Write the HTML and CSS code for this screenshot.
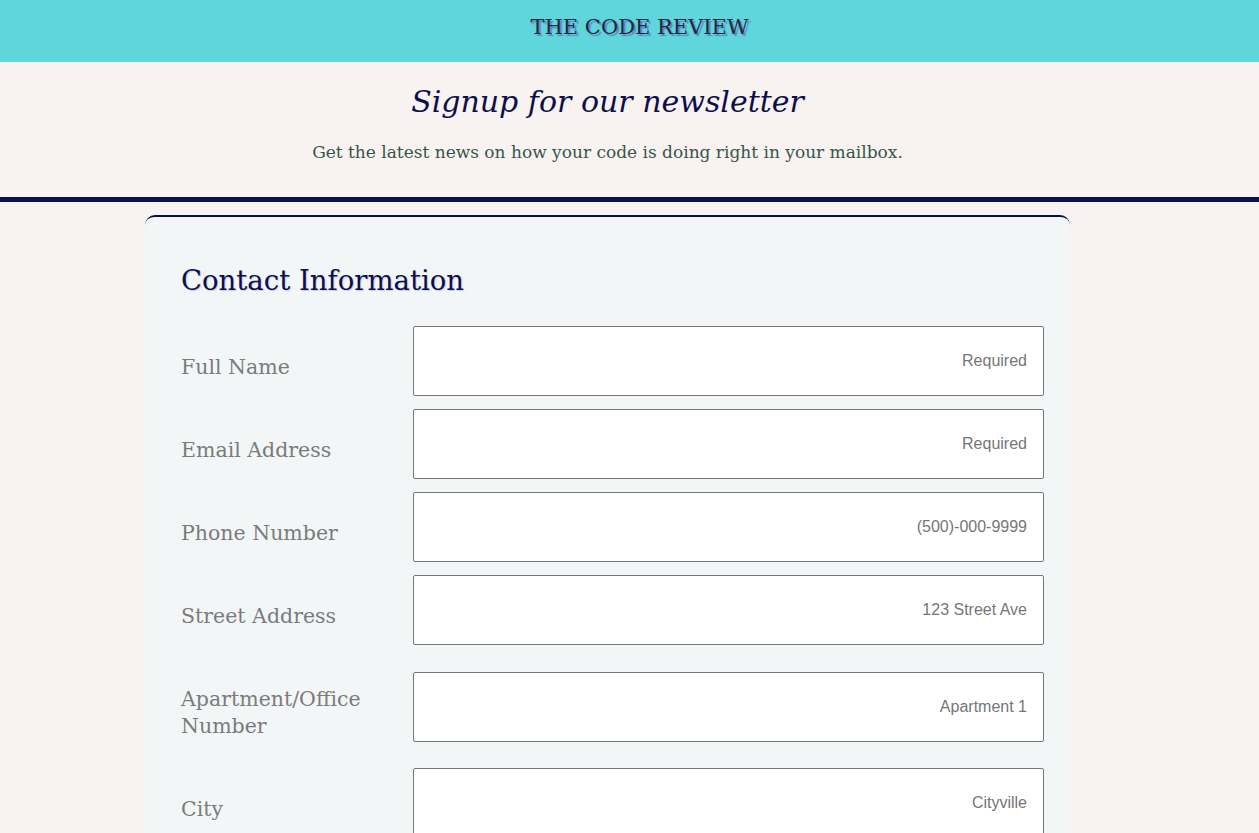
FILE: index.html
```html
<!DOCTYPE html>
<html lang="en">
<head>
<meta charset="utf-8">
<title>The Code Review</title>
<link rel="stylesheet" href="styles.css">
</head>
<body>
<header class="topbar">
  <div class="brand">THE CODE REVIEW</div>
</header>
<section class="intro">
  <h1 class="title">Signup for our newsletter</h1>
  <p class="subtitle">Get the latest news on how your code is doing right in your mailbox.</p>
</section>
<div class="rule"></div>
<main class="card">
  <h2 class="card-title">Contact Information</h2>
  <form class="form">
    <div class="row">
      <label class="label" for="name">Full Name</label>
      <input class="field" id="name" type="text" placeholder="Required">
    </div>
    <div class="row">
      <label class="label" for="email">Email Address</label>
      <input class="field" id="email" type="email" placeholder="Required">
    </div>
    <div class="row">
      <label class="label" for="phone">Phone Number</label>
      <input class="field" id="phone" type="tel" placeholder="(500)-000-9999">
    </div>
    <div class="row">
      <label class="label" for="street">Street Address</label>
      <input class="field" id="street" type="text" placeholder="123 Street Ave">
    </div>
    <div class="row">
      <label class="label" for="apt">Apartment/Office Number</label>
      <input class="field" id="apt" type="text" placeholder="Apartment 1">
    </div>
    <div class="row">
      <label class="label" for="city">City</label>
      <input class="field" id="city" type="text" placeholder="Cityville">
    </div>
  </form>
</main>
</body>
</html>
```

FILE: styles.css
```css
html, body {
  margin: 0;
  padding: 0;
}
body {
  background: #f8f3f0;
  font-family: "DejaVu Serif", "Liberation Serif", serif;
  height: 833px;
  overflow: hidden;
}
.topbar {
  height: 62px;
  background: #5fd6dc;
  display: flex;
  align-items: center;
  justify-content: center;
  padding-left: 20px;
}
.brand {
  font-size: 21px;
  color: #26263a;
  text-shadow: 2px 2px 1px #5f80c6;
  margin-top: -8px;
}
.intro {
  text-align: center;
  padding: 20px 44px 0 0;
  height: 115px;
}
.title {
  margin: 0;
  font-size: 30px;
  font-style: italic;
  font-weight: normal;
  color: #0d0f4d;
  line-height: 40px;
}
.subtitle {
  margin: 18px 0 0;
  font-size: 17px;
  color: #36564a;
  line-height: 24px;
}
.rule {
  height: 5px;
  background: #0b0f4a;
}
.card {
  margin: 13px 0 0 145px;
  width: 925px;
  box-sizing: border-box;
  background: #f2f6f7;
  border-top: 2px solid #0b0f4a;
  border-radius: 10px 10px 0 0;
  padding: 46px 26px 40px 36px;
}
.card-title {
  margin: 0 0 29px;
  font-size: 27.5px;
  font-weight: normal;
  color: #0d0f4d;
  line-height: 34px;
  text-shadow: 1px 1px 1px rgba(120, 130, 200, 0.35);
}
.form {
  display: flex;
  flex-direction: column;
  gap: 13px;
}
.row {
  display: flex;
  align-items: center;
}
.label {
  width: 232px;
  flex: none;
  box-sizing: border-box;
  padding: 28px 20px 15px 0;
  font-size: 20.5px;
  line-height: 27px;
  color: #7b7b7b;
}
.field {
  flex: 1;
  height: 70px;
  box-sizing: border-box;
  border: 1px solid #767676;
  border-radius: 2px;
  background: #ffffff;
  padding: 0 16px;
  text-align: right;
  font-family: "Liberation Sans", Arial, sans-serif;
  font-size: 16px;
  color: #333;
}
.field::placeholder {
  color: #767676;
  opacity: 1;
}
```
